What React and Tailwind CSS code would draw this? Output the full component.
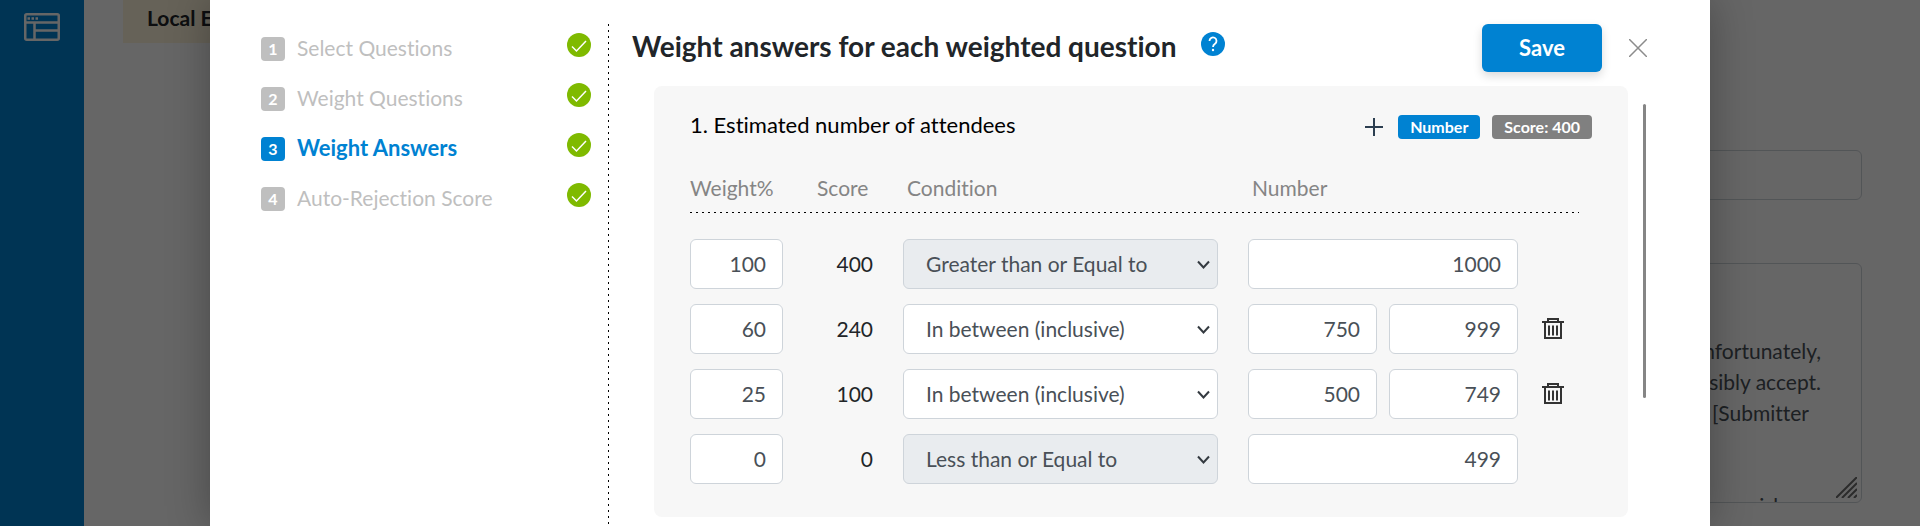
import React, { useState } from 'react';

const steps = ['Select Questions', 'Weight Questions', 'Weight Answers', 'Auto-Rejection Score'];

const conditions = ['Greater than or Equal to', 'In between (inclusive)', 'Less than or Equal to'];

const initialRows = [
  { id: 1, weight: '100', score: 400, condition: conditions[0], values: ['1000'], locked: true },
  { id: 2, weight: '60', score: 240, condition: conditions[1], values: ['750', '999'], locked: false },
  { id: 3, weight: '25', score: 100, condition: conditions[1], values: ['500', '749'], locked: false },
  { id: 4, weight: '0', score: 0, condition: conditions[2], values: ['499'], locked: true },
];

function App() {
  const [rows, setRows] = useState(initialRows);

  const removeRow = (id) => setRows((current) => current.filter((row) => row.id !== id));

  return (
    <div className="relative h-screen overflow-hidden bg-white font-[Lato,'Noto_Sans',sans-serif] text-[21px] leading-8 text-[#212529] [font-variant-ligatures:none]">
      <PageBehind />

      <div className="absolute inset-0 flex justify-center bg-black/60">
        <div
          role="dialog"
          aria-labelledby="dialog-title"
          className="flex w-full max-w-[1500px] bg-white pt-6 shadow-[0_0_40px_rgba(0,0,0,0.3)]"
        >
          <Steps active={2} />

          <main className="flex min-w-0 grow flex-col pl-[23px]">
            <header className="flex h-12 items-center pr-[63px]">
              <h1 id="dialog-title" className="pb-1 text-[28px] font-bold">
                Weight answers for each weighted question
              </h1>
              <button type="button" aria-label="Help" className="mb-2 ml-[25px]">
                <HelpIcon />
              </button>
              <button
                type="button"
                className="ml-auto h-12 w-[120px] rounded-md bg-[#0082d2] text-[22px] font-bold text-white shadow-[0_4px_10px_rgba(0,0,0,0.15)]"
              >
                Save
              </button>
              <button type="button" aria-label="Close" className="ml-[27px] text-[#8c8c8c]">
                <svg width="18" height="18" viewBox="0 0 18 18" stroke="currentColor" strokeWidth="1.500" className="block">
                  <path d="M0 0L18 18M18 0L0 18" />
                </svg>
              </button>
            </header>

            <div className="flex items-start pt-[14px] pr-16 pl-[22px]">
              <Question rows={rows} onRemove={removeRow} />
              <div className="mt-[18px] ml-[15px] h-[294px] w-[3px] shrink-0 rounded-full bg-[#858585]" />
            </div>
          </main>
        </div>
      </div>
    </div>
  );
}

function Steps({ active }) {
  return (
    <nav className="w-[399px] shrink-0 bg-[linear-gradient(black_2px,transparent_2px)] bg-[length:1px_6px] bg-[position:right_top] bg-repeat-y pt-2 pr-[18px] pl-[51px]">
      <ol>
        {steps.map((step, index) => (
          <li key={step} className="flex h-[50px]">
            <a
              href="#"
              className={`flex grow gap-3 ${index === active ? 'text-[22px] font-bold text-[#0082d2]' : 'text-[#bfbfbf]'}`}
            >
              <span
                className={`mt-[5px] flex size-6 items-center justify-center rounded text-base font-bold text-white ${
                  index === active ? 'bg-[#0082d2]' : 'bg-[#bfbfbf]'
                }`}
              >
                {index + 1}
              </span>
              <span>{step}</span>
            </a>
            <svg width="24" height="24" viewBox="0 0 24 24" fill="none" aria-label="Done" className="mt-px">
              <circle cx="12" cy="12" r="12" fill="#7fba00" />
              <path d="M5 13.500l4.500 4.500L19 8" stroke="white" strokeWidth="1.500" />
            </svg>
          </li>
        ))}
      </ol>
    </nav>
  );
}

function Question({ rows, onRemove }) {
  return (
    <section className="min-w-0 grow rounded-lg bg-[#f7f7f7] px-9 pb-[26px]">
      <div className="flex items-center pt-[23px]">
        <h2 className="pb-1 text-[22px] text-black">1. Estimated number of attendees</h2>
        <button type="button" aria-label="Add condition" className="ml-auto text-[#2c3e50]">
          <svg width="18" height="18" viewBox="0 0 18 18" stroke="currentColor" strokeWidth="2" className="block">
            <path d="M0 9H18M9 0V18" />
          </svg>
        </button>
        <span className="ml-[15px] rounded bg-[#0082d2] px-3 text-base leading-6 font-bold text-white">Number</span>
        <span className="ml-3 rounded bg-[#808080] px-3 text-base leading-6 font-bold text-white">Score: 400</span>
      </div>

      <div className="pr-[13px]">
        <table className="mt-[17px] w-full table-fixed text-left">
          <thead className="text-[#858585]">
            <tr className="h-[51px] bg-[linear-gradient(to_right,black_2px,transparent_2px)] bg-[length:6px_1px] bg-[position:left_bottom] bg-repeat-x">
              <th className="w-[93px] pt-[10px] align-top font-normal">Weight%</th>
              <th className="w-[120px] pt-[10px] pl-[34px] align-top font-normal">Score</th>
              <th className="w-[345px] pt-[10px] pl-1 align-top font-normal">Condition</th>
              <th className="pt-[10px] pl-1 align-top font-normal">Number</th>
              <th className="w-[61px]" aria-label="Actions" />
            </tr>
          </thead>
          <tbody>
            <tr className="h-[18px]" aria-hidden="true" />
            {rows.map((row) => (
              <AnswerRow key={row.id} row={row} onRemove={onRemove} />
            ))}
          </tbody>
        </table>
      </div>
    </section>
  );
}

function AnswerRow({ row, onRemove }) {
  return (
    <tr className="h-[65px]">
      <td>
        <NumberField label={`Weight for ${row.condition}`} value={row.weight} />
      </td>
      <td className="pr-[30px] text-right">{row.score}</td>
      <td className="pr-[30px]">
        <div className="relative">
          <select
            aria-label="Condition"
            defaultValue={row.condition}
            disabled={row.locked}
            className="block h-[50px] w-full appearance-none rounded-md border border-[#ced4da] bg-white pl-[22px] text-[#495057] opacity-100 disabled:bg-[#e9ecef]"
          >
            {conditions.map((condition) => (
              <option key={condition}>{condition}</option>
            ))}
          </select>
          <svg
            className="pointer-events-none absolute top-[21px] right-2 text-[#343a40]"
            width="13"
            height="10"
            viewBox="0 0 13 10"
            fill="none"
            stroke="currentColor"
            strokeWidth="2"
          >
            <path d="M1 1.500l5.500 6l5.500-6" />
          </svg>
        </div>
      </td>
      <td>
        <div className="flex gap-3">
          {row.values.map((value, index) => (
            <NumberField key={value} label={`Number ${index + 1}`} value={value} />
          ))}
        </div>
      </td>
      <td className="pl-6">
        {row.locked ? null : (
          <button type="button" aria-label="Delete" className="block" onClick={() => onRemove(row.id)}>
            <TrashIcon />
          </button>
        )}
      </td>
    </tr>
  );
}

function NumberField({ label, value }) {
  return (
    <input
      aria-label={label}
      defaultValue={value}
      className="block h-[50px] w-full min-w-0 rounded-md border border-[#ced4da] bg-white pr-4 text-right text-[#495057]"
    />
  );
}

function PageBehind() {
  return (
    <div className="flex h-full">
      <aside className="w-[84px] shrink-0 bg-[#0082d2] pt-[13px] pl-6">
        <svg width="36" height="28" viewBox="0 0 36 28" fill="none" stroke="white" strokeWidth="2.500">
          <rect x="1.250" y="1.250" width="33.500" height="25.500" rx="1.500" />
          <path d="M1 9.500h34M10.500 9.500v17M10.500 17.500H35" />
          <path d="M3.500 5.500h11" strokeDasharray="2.500 1.500" />
        </svg>
      </aside>
      <div className="min-w-0 grow pr-[58px] pl-[39px]">
        <p className="mb-[107px] h-[43px] w-64 bg-[#fff6dc] pt-0.5 pl-6 font-bold">Local Events</p>
        <div className="ml-auto w-1/2">
          <input
            aria-label="Subject"
            className="block h-[50px] w-full rounded-md border border-[#ced4da]"
          />
          <div className="relative mt-[63px] h-[240px] overflow-hidden rounded-md border border-[#ced4da] pt-[71px] pr-10 text-right leading-[31px] text-[#495057]">
            <p>Thank you for your interest. Unfortunately,</p>
            <p>we have more requests than we can possibly accept.</p>
            <p className="pr-3 pb-[62px]">[Submitter</p>
            <p className="pr-9">we wish</p>
            <svg className="absolute right-1 bottom-1" width="21" height="21" viewBox="0 0 21 21" stroke="#6c6c6c" strokeWidth="2">
              <path d="M0 21L21 0M6 21L21 6M12 21l9-9M18 21l3-3" />
            </svg>
          </div>
        </div>
      </div>
    </div>
  );
}

function HelpIcon() {
  return (
    <svg width="24" height="24" viewBox="0 0 24 24" fill="none" className="block">
      <circle cx="12" cy="12" r="12" fill="#0082d2" />
      <path d="M8.500 9a3.500 3.500 0 1 1 5.500 2.800c-1.300.9-2 1.500-2 3.200" stroke="white" strokeWidth="1.800" />
      <circle cx="12" cy="18" r="1.200" fill="white" />
    </svg>
  );
}

function TrashIcon() {
  return (
    <svg width="22" height="23" viewBox="0 0 22 23" fill="none" stroke="#333" strokeWidth="2" className="block">
      <path d="M0 5h22M6 4.500V2h10v2.500M3 5v16h16V5" />
      <path d="M7 8.500v10M11 8.500v10M15 8.500v10" />
    </svg>
  );
}

export default App;
